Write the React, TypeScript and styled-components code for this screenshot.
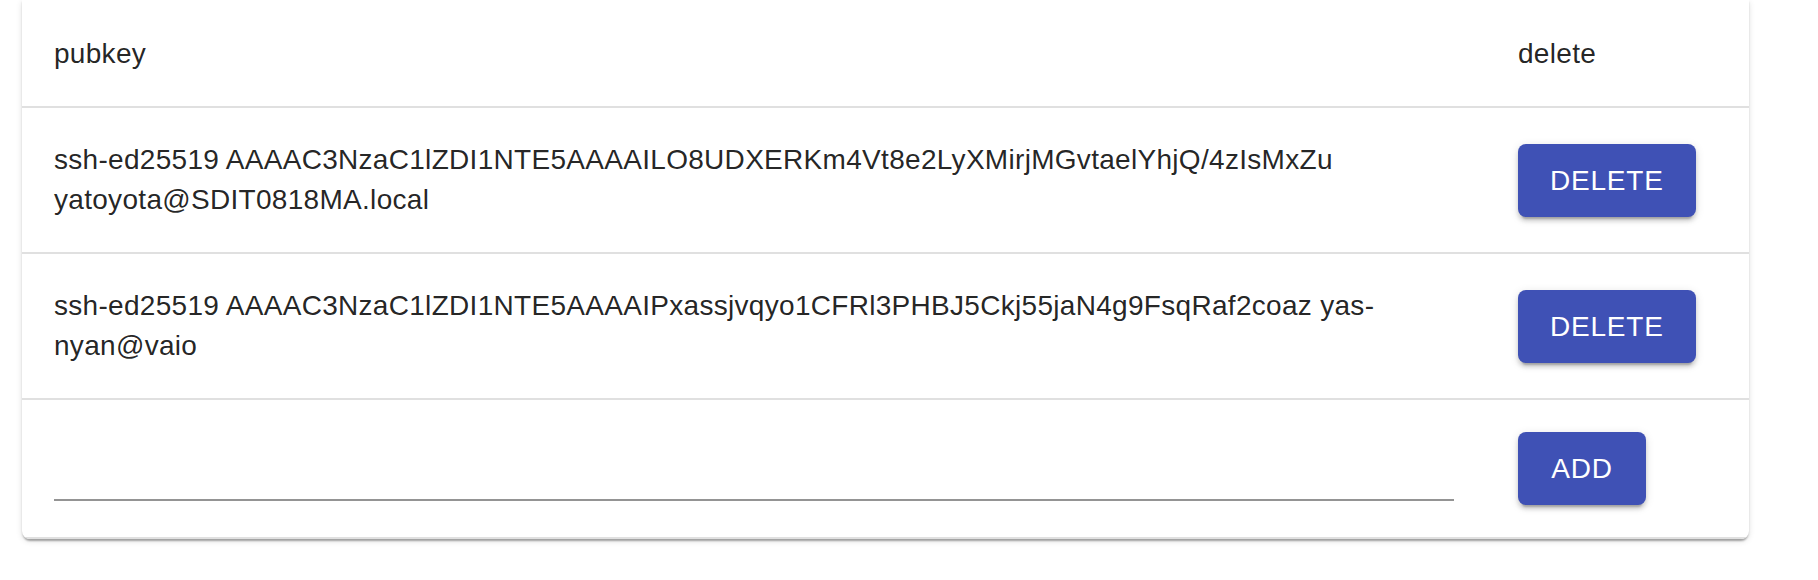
import React from "react";
import styled, { createGlobalStyle } from "styled-components";

const GlobalStyle = createGlobalStyle`
  html, body {
    margin: 0;
    padding: 0;
    background: #ffffff;
  }
  body {
    font-family: "Liberation Sans", Arial, Helvetica, sans-serif;
    color: rgba(0, 0, 0, 0.87);
  }
  * { box-sizing: border-box; }
`;

const Page = styled.div`
  width: 1818px;
  height: 580px;
  padding: 0 0 0 22px;
  overflow: hidden;
`;

const Paper = styled.div`
  width: 1727px;
  background: #ffffff;
  border-radius: 0 0 8px 8px;
  box-shadow: 0px 4px 2px -2px rgba(0, 0, 0, 0.2),
    0px 2px 2px 0px rgba(0, 0, 0, 0.14), 0px 2px 6px 0px rgba(0, 0, 0, 0.12);
  overflow: hidden;
`;

const Table = styled.table`
  width: 100%;
  border-collapse: collapse;
  border-spacing: 0;
`;

const Cell = styled.td<{ $last?: boolean; $head?: boolean }>`
  box-sizing: content-box;
  padding: ${(p) => (p.$head ? "34px" : "32px")}
    ${(p) => (p.$last ? "48px" : "32px")} 32px 32px;
  border-bottom: 2px solid rgb(224, 224, 224);
  font-size: 28px;
  line-height: 40px;
  font-weight: 400;
  letter-spacing: 0.3px;
  text-align: left;
  vertical-align: middle;
  color: rgba(0, 0, 0, 0.87);
  width: ${(p) => (p.$last ? "183px" : "auto")};
`;

const HeadCell = styled(Cell).attrs({ as: "th", $head: true })``;

const KeyText = styled.span`
  word-break: normal;
  overflow-wrap: break-word;
`;

const Button = styled.button`
  display: inline-flex;
  align-items: center;
  justify-content: center;
  min-width: 128px;
  height: 73px;
  padding: 12px 32px;
  border: none;
  border-radius: 8px;
  background: #3f51b5;
  color: #ffffff;
  font-family: "Liberation Sans", Arial, Helvetica, sans-serif;
  font-size: 28px;
  font-weight: 400;
  letter-spacing: 0.8px;
  text-transform: uppercase;
  line-height: 1.75;
  cursor: pointer;
  box-shadow: 0px 6px 2px -4px rgba(0, 0, 0, 0.2),
    0px 4px 4px 0px rgba(0, 0, 0, 0.14), 0px 2px 10px 0px rgba(0, 0, 0, 0.12);
`;

const InputWrap = styled.div`
  display: flex;
  height: 64px;
  border-bottom: 2px solid rgba(0, 0, 0, 0.42);
`;

const Input = styled.input`
  flex: 1;
  border: none;
  outline: none;
  background: transparent;
  padding: 12px 0 12px;
  font-family: "Liberation Sans", Arial, Helvetica, sans-serif;
  font-size: 32px;
  color: rgba(0, 0, 0, 0.87);
`;

const keys = [
  "ssh-ed25519 AAAAC3NzaC1lZDI1NTE5AAAAILO8UDXERKm4Vt8e2LyXMirjMGvtaelYhjQ/4zIsMxZu yatoyota@SDIT0818MA.local",
  "ssh-ed25519 AAAAC3NzaC1lZDI1NTE5AAAAIPxassjvqyo1CFRl3PHBJ5Ckj55jaN4g9FsqRaf2coaz yas-nyan@vaio",
];

export default function App() {
  return (
    <>
      <GlobalStyle />
      <Page>
        <Paper>
          <Table>
            <thead>
              <tr>
                <HeadCell>pubkey</HeadCell>
                <HeadCell $last>delete</HeadCell>
              </tr>
            </thead>
            <tbody>
              {keys.map((k) => (
                <tr key={k}>
                  <Cell>
                    <KeyText>{k}</KeyText>
                  </Cell>
                  <Cell $last>
                    <Button>Delete</Button>
                  </Cell>
                </tr>
              ))}
              <tr>
                <Cell>
                  <InputWrap>
                    <Input type="text" />
                  </InputWrap>
                </Cell>
                <Cell $last>
                  <Button>Add</Button>
                </Cell>
              </tr>
            </tbody>
          </Table>
        </Paper>
      </Page>
    </>
  );
}
